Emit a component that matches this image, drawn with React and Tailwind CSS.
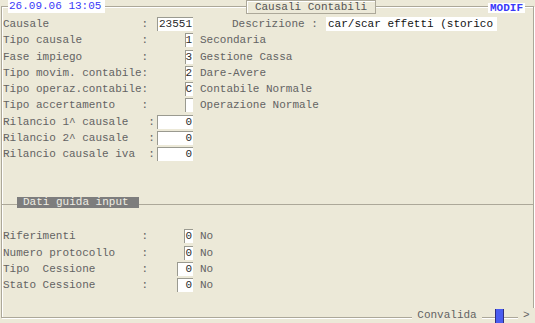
import React from "react";

const mono = { fontFamily: '"Liberation Mono", "Courier New", monospace' };

const topRows = [
  { label: "Causale              :", value: "23551", box: "w-[36px]", extra: "desc" },
  { label: "Tipo causale         :", value: "1", box: "w-[8px]", text: "Secondaria" },
  { label: "Fase impiego         :", value: "3", box: "w-[8px]", text: "Gestione Cassa" },
  { label: "Tipo movim. contabile:", value: "2", box: "w-[8px]", text: "Dare-Avere" },
  { label: "Tipo operaz.contabile:", value: "C", box: "w-[8px]", text: "Contabile Normale" },
  { label: "Tipo accertamento    :", value: "", box: "w-[8px]", text: "Operazione Normale" },
  { label: "Rilancio 1^ causale   :", value: "0", box: "w-[36px]" },
  { label: "Rilancio 2^ causale   :", value: "0", box: "w-[36px]" },
  { label: "Rilancio causale iva  :", value: "0", box: "w-[36px]" },
];

const bottomRows = [
  { label: "Riferimenti          :", value: "0", box: "w-[9px]" },
  { label: "Numero protocollo    :", value: "0", box: "w-[9px]" },
  { label: "Tipo  Cessione       :", value: "0", box: "w-[16px]" },
  { label: "Stato Cessione       :", value: "0", box: "w-[16px]" },
];

const Field = ({ value, box }) => (
  <div
    className={`${box} h-[14px] bg-white border-t border-l border-[#9a9a90] flex items-center justify-end pr-[1px] text-[#2a2a2a] leading-[13px]`}
  >
    {value}
  </div>
);

const Row = ({ row }) => (
  <div className="h-[16.25px] flex items-center">
    <span className="w-[154px] whitespace-pre text-[#636363]">{row.label}</span>
    <div className="w-[36px] flex justify-end">
      <Field value={row.value} box={row.box} />
    </div>
    {row.text && <span className="ml-[7px] text-[#636363]">{row.text}</span>}
    {row.extra === "desc" && (
      <>
        <span className="ml-[39px] w-[94px] whitespace-pre text-[#636363]">Descrizione :</span>
        <div className="w-[171px] h-[14px] bg-white flex items-center pl-[2px] text-[#111]">
          car/scar effetti (storico
        </div>
      </>
    )}
  </div>
);

export default function App() {
  return (
    <div className="w-[535px] h-[323px] bg-[#ECE9D8] relative overflow-hidden text-[11px] leading-[14px]" style={mono}>
      <div className="mt-[6px] ml-[1px] w-[533px] h-[312px] border border-[#aca899] shadow-[inset_1px_1px_0_#ffffff,1px_1px_0_#ffffff]">
        <div className="pt-[9px] pl-[1px]">
          {topRows.map((r, i) => (
            <Row key={i} row={r} />
          ))}
        </div>

        <div className="mt-[35px] flex items-center -ml-[1px]">
          <div className="w-[16px] h-0 border-t border-[#aca899] mt-[4px]" />
          <div className="w-[122px] h-[11px] bg-[#7d7d7d] text-[#f0eee4] leading-[11px] pl-[6px] whitespace-pre">
            Dati guida input
          </div>
          <div className="flex-1 h-0 border-t border-[#aca899] mt-[4px]" />
        </div>

        <div className="mt-[20px] pl-[1px]">
          {bottomRows.map((r, i) => (
            <div key={i} className="h-[16.25px] flex items-center">
              <span className="w-[154px] whitespace-pre text-[#636363]">{r.label}</span>
              <div className="w-[36px] flex justify-end">
                <Field value={r.value} box={r.box} />
              </div>
              <span className="ml-[7px] text-[#636363]">No</span>
            </div>
          ))}
        </div>
      </div>

      {/* header overlays */}
      <div className="absolute left-[8px] top-0 w-[97px] h-[13px] bg-white text-[#3a3af8] leading-[13px] pl-[1px]">
        26.09.06 13:05
      </div>
      <div className="absolute left-[246px] top-0 w-[130px] h-[14px] bg-[#ECE9D8] border border-[#aca899] shadow-[inset_1px_1px_0_#ffffff] text-[#555555] leading-[12px] text-center">
        Causali Contabili
      </div>
      <div className="absolute left-[488px] top-[3px] w-[37px] h-[10px] bg-white text-[#3a3af8] font-bold leading-[10px] text-center">
        MODIF
      </div>

      {/* footer overlays */}
      <div className="absolute left-[412px] top-[308px] w-[70px] h-[15px] bg-[#ECE9D8] text-[#636363] leading-[15px] text-center">
        Convalida
      </div>
      <div className="absolute left-[495px] top-[309px] w-[9px] h-[14px] bg-[#4a5cf0] border-l border-r border-[#2e2e80]" />
      <div className="absolute left-[518px] top-[308px] w-[17px] h-[15px] bg-[#ECE9D8] text-[#636363] leading-[15px] pl-[5px]">
        &gt;
      </div>
    </div>
  );
}
